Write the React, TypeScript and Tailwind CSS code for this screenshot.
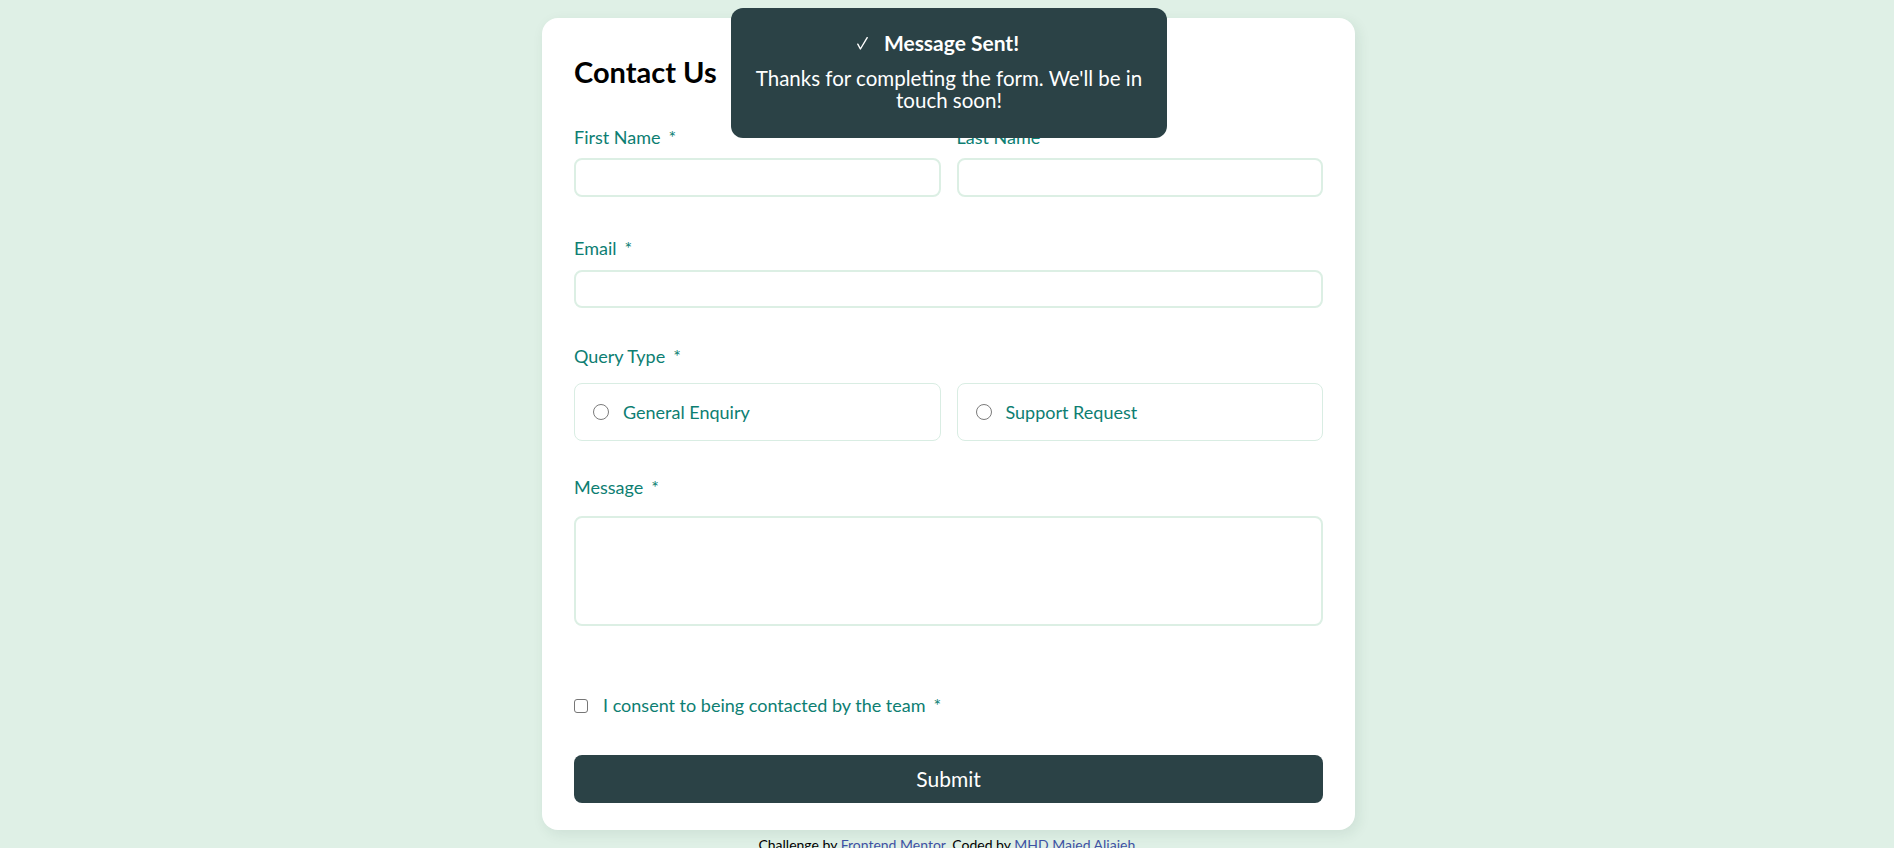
import { ReactNode } from "react";

function Label({ children, required = true }: { children: ReactNode; required?: boolean }) {
  return (
    <label className="block text-[18px] leading-[27px] text-[#0d7e72]">
      {children}
      {required && <span className="ml-2">*</span>}
    </label>
  );
}

function TextField({ label }: { label: string }) {
  return (
    <div className="flex flex-col">
      <Label>{label}</Label>
      <input
        type="text"
        className="mt-[7px] h-[39px] w-full rounded-lg border-2 border-[#dcefe4] bg-white px-4 outline-none"
      />
    </div>
  );
}

function RadioOption({ label }: { label: string }) {
  return (
    <label className="flex h-[58px] items-center gap-[14px] rounded-lg border border-[#d9ede3] pl-[18px]">
      <input
        type="radio"
        name="query"
        className="h-4 w-4 appearance-none rounded-full border-[1.5px] border-[#7b7b7b] bg-white"
      />
      <span className="text-[18px] leading-[27px] text-[#0d7e72]">{label}</span>
    </label>
  );
}

export default function App() {
  return (
    <div className="relative flex min-h-screen flex-col items-center bg-[#dff0e6] pl-[3px] pt-[18px] font-[Lato,sans-serif]">
      {/* toast */}
      <div className="absolute left-[calc(50%+2px)] top-[8px] z-10 flex h-[130px] w-[436px] -translate-x-1/2 flex-col items-center rounded-xl bg-[#2b4246] px-5 pt-[21px] text-white">
        <div className="flex items-center gap-4 pr-[22px] text-[21px] font-bold leading-[28px]">
          <svg width="11" height="13" viewBox="0 0 11 13" fill="none" className="mt-[1px]">
            <path d="M0.8 7.2 L3.4 12 L10.2 0.6" stroke="white" strokeWidth="1.4" strokeLinecap="round" strokeLinejoin="round" />
          </svg>
          <span>Message Sent!</span>
        </div>
        <p className="mt-[10px] text-center text-[20.5px] leading-[22px]">
          Thanks for completing the form. We'll be in touch soon!
        </p>
      </div>

      <form className="flex w-[813px] flex-col rounded-2xl bg-white px-8 pb-[27px] pt-8 shadow-[3px_4px_14px_rgba(20,70,40,0.09)]">
        <h1 className="text-[29px] font-bold leading-[44px] text-black">Contact Us</h1>

        <div className="mt-[30px] grid grid-cols-2 gap-4">
          <TextField label="First Name" />
          <TextField label="Last Name" />
        </div>

        <div className="mt-[38px] flex flex-col">
          <Label>Email</Label>
          <input
            type="email"
            className="mt-[8px] h-[38px] w-full rounded-lg border-2 border-[#dcefe4] bg-white px-4 outline-none"
          />
        </div>

        <div className="mt-[35px]">
          <Label>Query Type</Label>
          <div className="mt-[13px] grid grid-cols-2 gap-4">
            <RadioOption label="General Enquiry" />
            <RadioOption label="Support Request" />
          </div>
        </div>

        <div className="mt-[33px] flex flex-col">
          <Label>Message</Label>
          <textarea className="mt-[15px] h-[110px] w-full resize-none rounded-lg border-2 border-[#dcefe4] bg-white px-4 py-2 outline-none" />
        </div>

        <label className="mt-[66px] flex items-center gap-[15px]">
          <input
            type="checkbox"
            className="h-[14px] w-[14px] appearance-none rounded-[3px] border-[1.5px] border-[#767676] bg-white"
          />
          <span className="text-[18px] leading-[27px] text-[#0d7e72]">
            I consent to being contacted by the team
            <span className="ml-2">*</span>
          </span>
        </label>

        <button
          type="button"
          className="mt-[36px] h-[48px] w-full rounded-lg bg-[#2b4246] text-[21px] text-white"
        >
          Submit
        </button>
      </form>

      <p className="mt-[7px] text-[14px] leading-[16px] text-black">
        Challenge by <a className="text-[#3e52a3]">Frontend Mentor</a>. Coded by{" "}
        <a className="text-[#3e52a3]">MHD Majed Aljajeh</a>.
      </p>
    </div>
  );
}
